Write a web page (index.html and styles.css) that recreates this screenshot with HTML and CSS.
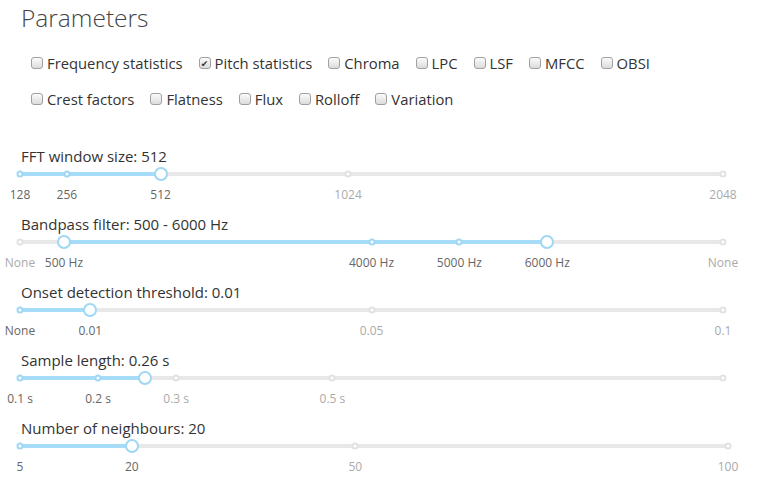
FILE: index.html
```html
<!DOCTYPE html>
<html>
<head>
<meta charset="utf-8">
<link rel="stylesheet" href="styles.css">
</head>
<body>
<div class="page">
  <h1 class="title">Parameters</h1>
  <div class="checks">
    <div class="check-row">
      <label class="check"><span class="box"></span>Frequency statistics</label>
      <label class="check"><span class="box checked">&#10004;</span>Pitch statistics</label>
      <label class="check"><span class="box"></span>Chroma</label>
      <label class="check"><span class="box"></span>LPC</label>
      <label class="check"><span class="box"></span>LSF</label>
      <label class="check"><span class="box"></span>MFCC</label>
      <label class="check"><span class="box"></span>OBSI</label>
    </div>
    <div class="check-row">
      <label class="check"><span class="box"></span>Crest factors</label>
      <label class="check"><span class="box"></span>Flatness</label>
      <label class="check"><span class="box"></span>Flux</label>
      <label class="check"><span class="box"></span>Rolloff</label>
      <label class="check"><span class="box"></span>Variation</label>
    </div>
  </div>

  <div class="sliders">
    <div class="slider">
      <div class="slider-label">FFT window size: 512</div>
      <div class="track">
        <div class="fill" style="left:0%;width:20%"></div>
        <span class="tick on" style="left:0%"></span>
        <span class="tick on" style="left:6.667%"></span>
        <span class="tick" style="left:46.667%"></span>
        <span class="tick" style="left:100%"></span>
        <span class="handle" style="left:20%"></span>
        <span class="tlabel on" style="left:0%">128</span>
        <span class="tlabel on" style="left:6.667%">256</span>
        <span class="tlabel on" style="left:20%">512</span>
        <span class="tlabel" style="left:46.667%">1024</span>
        <span class="tlabel" style="left:100%">2048</span>
      </div>
    </div>

    <div class="slider">
      <div class="slider-label">Bandpass filter: 500 - 6000 Hz</div>
      <div class="track">
        <div class="fill" style="left:6.25%;width:68.75%"></div>
        <span class="tick" style="left:0%"></span>
        <span class="tick on" style="left:50%"></span>
        <span class="tick on" style="left:62.5%"></span>
        <span class="tick" style="left:100%"></span>
        <span class="handle" style="left:6.25%"></span>
        <span class="handle" style="left:75%"></span>
        <span class="tlabel" style="left:0%">None</span>
        <span class="tlabel on" style="left:6.25%">500 Hz</span>
        <span class="tlabel on" style="left:50%">4000 Hz</span>
        <span class="tlabel on" style="left:62.5%">5000 Hz</span>
        <span class="tlabel on" style="left:75%">6000 Hz</span>
        <span class="tlabel" style="left:100%">None</span>
      </div>
    </div>

    <div class="slider">
      <div class="slider-label">Onset detection threshold: 0.01</div>
      <div class="track">
        <div class="fill" style="left:0%;width:10%"></div>
        <span class="tick on" style="left:0%"></span>
        <span class="tick" style="left:50%"></span>
        <span class="tick" style="left:100%"></span>
        <span class="handle" style="left:10%"></span>
        <span class="tlabel on" style="left:0%">None</span>
        <span class="tlabel on" style="left:10%">0.01</span>
        <span class="tlabel" style="left:50%">0.05</span>
        <span class="tlabel" style="left:100%">0.1</span>
      </div>
    </div>

    <div class="slider">
      <div class="slider-label">Sample length: 0.26 s</div>
      <div class="track">
        <div class="fill" style="left:0%;width:17.78%"></div>
        <span class="tick on" style="left:0%"></span>
        <span class="tick on" style="left:11.11%"></span>
        <span class="tick" style="left:22.22%"></span>
        <span class="tick" style="left:44.44%"></span>
        <span class="tick" style="left:100%"></span>
        <span class="handle" style="left:17.78%"></span>
        <span class="tlabel on" style="left:0%">0.1 s</span>
        <span class="tlabel on" style="left:11.11%">0.2 s</span>
        <span class="tlabel" style="left:22.22%">0.3 s</span>
        <span class="tlabel" style="left:44.44%">0.5 s</span>
      </div>
    </div>

    <div class="slider">
      <div class="slider-label">Number of neighbours: 20</div>
      <div class="track wide">
        <div class="fill" style="left:0%;width:15.79%"></div>
        <span class="tick on" style="left:0%"></span>
        <span class="tick" style="left:47.37%"></span>
        <span class="tick" style="left:100%"></span>
        <span class="handle" style="left:15.79%"></span>
        <span class="tlabel on" style="left:0%">5</span>
        <span class="tlabel on" style="left:15.79%">20</span>
        <span class="tlabel" style="left:47.37%">50</span>
        <span class="tlabel" style="left:100%">100</span>
      </div>
    </div>
  </div>
</div>
</body>
</html>
```

FILE: styles.css
```css
html, body {
  margin: 0;
  padding: 0;
  background: #fff;
}
body {
  font-family: "Open Sans", "DejaVu Sans", sans-serif;
  color: #333;
}
.page {
  width: 776px;
}
.title {
  margin: 0;
  padding: 2px 0 0 21px;
  font-size: 24.5px;
  line-height: 32px;
  font-weight: 300;
  color: #444;
}
.checks {
  padding: 11px 0 0 31px;
}
.check-row {
  display: flex;
  gap: 16px;
  height: 36px;
  align-items: center;
}
.check {
  display: flex;
  align-items: center;
  font-size: 14.8px;
  color: #333;
  gap: 4px;
}
.box {
  display: inline-flex;
  align-items: center;
  justify-content: center;
  box-sizing: border-box;
  width: 12px;
  height: 12px;
  border: 1px solid #a0a0a0;
  border-radius: 3px;
  background: linear-gradient(#fbfbfb, #dcdcdc);
  font-size: 9px;
  line-height: 1;
  color: #333;
}
.sliders {
  padding-top: 29px;
}
.slider {
  height: 68px;
}
.slider-label {
  padding-left: 21px;
  font-size: 15px;
  line-height: 20px;
  color: #333;
}
.track {
  position: relative;
  margin: 6px 0 0 20px;
  width: 703px;
  height: 4px;
  background: #e8e8e8;
  border-radius: 2px;
}
.track.wide {
  width: 708px;
}
.fill {
  position: absolute;
  top: 0;
  height: 4px;
  background: #a6dcf7;
  border-radius: 2px;
}
.tick {
  position: absolute;
  top: 2px;
  width: 7px;
  height: 7px;
  box-sizing: border-box;
  border: 2px solid #e2e2e2;
  background: #fff;
  border-radius: 50%;
  transform: translate(-50%, -50%);
}
.tick.on {
  border-color: #9ed8f6;
}
.handle {
  position: absolute;
  top: 2px;
  width: 14px;
  height: 14px;
  box-sizing: border-box;
  border: 2px solid #9ed8f6;
  background: #fff;
  border-radius: 50%;
  transform: translate(-50%, -50%);
}
.tlabel {
  position: absolute;
  top: 16px;
  font-size: 12px;
  line-height: 14px;
  color: #aaa;
  transform: translateX(-50%);
  white-space: nowrap;
}
.tlabel.on {
  color: #666;
}
```
